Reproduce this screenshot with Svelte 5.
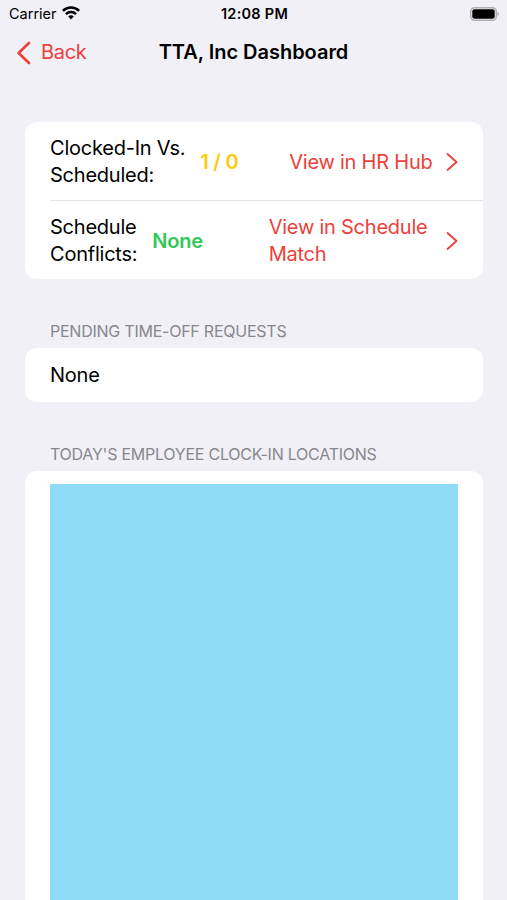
<script>
  let { title = 'TTA, Inc Dashboard' } = $props();

  const stats = [
    { label: ['Clocked-In Vs.', 'Scheduled:'], value: '1 / 0', tone: 'yellow', link: ['View in HR Hub'] },
    { label: ['Schedule', 'Conflicts:'], value: 'None', tone: 'green', link: ['View in Schedule', 'Match'] }
  ];
</script>

<div class="screen">
  <div class="status">
    <div class="carrier">
      <span>Carrier</span>
      <svg width="18" height="14" viewBox="0 0 18 14" fill="none" stroke="#000" stroke-width="2.5">
        <path d="M.9 4.9C5.4.4 12.6.4 17.1 4.9" />
        <path d="M3.9 8.1C6.7 5.3 11.3 5.3 14.1 8.1" />
        <path d="M6.2 10.4C7.8 8.9 10.2 8.9 11.8 10.4L9 13.4Z" fill="#000" stroke="none" />
      </svg>
    </div>
    <span class="time">12:08 PM</span>
    <svg class="battery" width="30" height="14" viewBox="0 0 30 14">
      <rect x=".7" y=".7" width="25.6" height="12.6" rx="3.8" fill="none" stroke="#b0b0b4" stroke-width="1.4" />
      <rect x="2.3" y="2.3" width="22.4" height="9.4" rx="2" />
      <path d="M27.4 4.7C29.4 5.5 29.4 8.5 27.4 9.3Z" fill="#b0b0b4" />
    </svg>
  </div>

  <header>
    <button class="back">
      <svg width="15" height="24" viewBox="0 0 15 24"><path d="M13 2L2.6 12L13 22" /></svg>
      <span>Back</span>
    </button>
    <h1>{title}</h1>
  </header>

  <main>
    <section class="card stats">
      {#each stats as s}
        <div class="row">
          <div class="label">
            {#each s.label as line}<div>{line}</div>{/each}
          </div>
          <strong class={s.tone}>{s.value}</strong>
          <div class="link" class:wrapped={s.link.length > 1}>
            <div>
              {#each s.link as line}<div>{line}</div>{/each}
            </div>
            <svg width="12" height="20" viewBox="0 0 12 20"><path d="M1.5 2L10.5 10L1.5 18" /></svg>
          </div>
        </div>
      {/each}
    </section>

    <h2>Pending Time-Off Requests</h2>
    <section class="card pending">None</section>

    <h2>Today's Employee Clock-In Locations</h2>
    <section class="card locations">
      <div class="map"></div>
    </section>
  </main>
</div>

<style>
  :global(body) { margin: 0; background: #f1f0f6; }
  .screen { height: 900px; overflow: hidden; display: flex; flex-direction: column; background: #f1f0f6; color: #000; font-family: Inter, 'Liberation Sans', sans-serif; font-size: 20px; line-height: 27px; letter-spacing: -0.23px; white-space: nowrap; }
  .status { height: 27px; flex: none; display: grid; grid-template-columns: 1fr auto 1fr; align-items: center; padding: 0 7px 0 9px; box-sizing: border-box; font-size: 14.5px; letter-spacing: 0; }
  .carrier { display: flex; align-items: center; gap: 5px; }
  .carrier svg { margin-top: -1px; }
  .time { font-weight: 600; letter-spacing: 0.25px; }
  .battery { justify-self: end; }
  header { height: 50px; flex: none; display: grid; grid-template-columns: 1fr auto 1fr; align-items: center; padding-top: 1px; box-sizing: border-box; }
  .back { display: flex; align-items: center; gap: 10px; padding: 0 0 0 16px; border: 0; background: none; color: #ee403b; font: inherit; letter-spacing: -0.3px; }
  .back path { fill: none; stroke: currentColor; stroke-width: 2.7; stroke-linecap: round; stroke-linejoin: round; }
  h1 { margin: 0; font-size: 20px; font-weight: 600; letter-spacing: -0.03px; }
  main { flex: 1; min-height: 0; padding: 45px 24.5px 0 25px; }
  .card { background: #fff; border-radius: 12px; }
  .row { display: flex; align-items: center; height: 76px; padding: 2px 25px 0 0; margin-left: 25px; }
  .row + .row { border-top: 1px solid #e5e5e8; }
  strong { font-weight: 600; margin-left: 15px; }
  .yellow { color: #fdcb0a; }
  .green { color: #34c759; }
  .link { margin-left: auto; display: flex; align-items: center; gap: 13px; color: #ee403b; }
  .wrapped { gap: 18px; }
  .link path { fill: none; stroke: currentColor; stroke-width: 1.8; stroke-linecap: round; stroke-linejoin: round; }
  h2 { margin: 42px 0 7px 25px; font-size: 16px; line-height: 20px; font-weight: 400; color: #88878c; letter-spacing: -0.24px; text-transform: uppercase; }
  .pending { padding: 14px 25px 13px; }
  .locations { padding: 13px 25px 0; }
  .map { height: 430px; background: #8edcf5; }
</style>
